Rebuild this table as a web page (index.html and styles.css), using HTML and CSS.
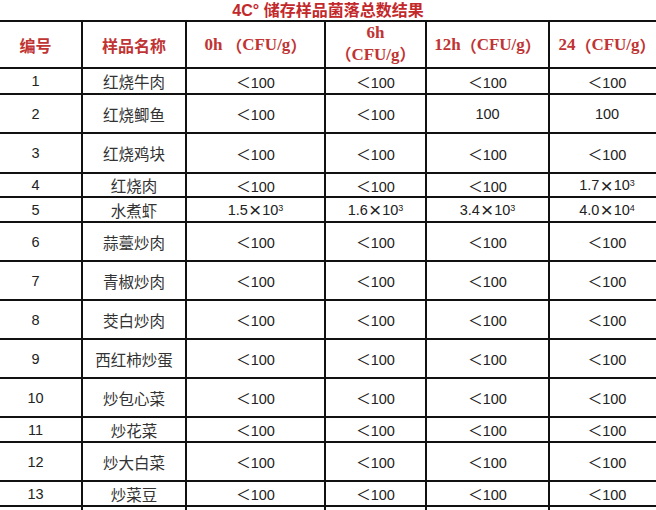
FILE: index.html
```html
<!DOCTYPE html>
<html lang="zh">
<head>
<meta charset="utf-8">
<title>4C° 储存样品菌落总数结果</title>
<link rel="stylesheet" href="styles.css">
</head>
<body>
<div class="page">
  <h1 class="title">4C° 储存样品菌落总数结果</h1>
  <div class="grid">
    <div class="cell head">编号</div>
    <div class="cell head">样品名称</div>
    <div class="cell head"><span class="lat">0h</span>&nbsp;（<span class="lat">CFU/g</span>）</div>
    <div class="cell head two"><span class="lat">6h</span><span>（<span class="lat">CFU/g</span>）</span></div>
    <div class="cell head"><span class="lat">12h</span>（<span class="lat">CFU/g</span>）</div>
    <div class="cell head"><span class="lat">24</span>（<span class="lat">CFU/g</span>）</div>

    <div class="cell num">1</div><div class="cell name">红烧牛肉</div><div class="cell num">＜100</div><div class="cell num">＜100</div><div class="cell num">＜100</div><div class="cell num">＜100</div>
    <div class="cell num">2</div><div class="cell name">红烧鲫鱼</div><div class="cell num">＜100</div><div class="cell num">＜100</div><div class="cell num">100</div><div class="cell num">100</div>
    <div class="cell num">3</div><div class="cell name">红烧鸡块</div><div class="cell num">＜100</div><div class="cell num">＜100</div><div class="cell num">＜100</div><div class="cell num">＜100</div>
    <div class="cell num">4</div><div class="cell name">红烧肉</div><div class="cell num">＜100</div><div class="cell num">＜100</div><div class="cell num">＜100</div><div class="cell num">1.7<span class="x">×</span>10<sup>3</sup></div>
    <div class="cell num">5</div><div class="cell name">水煮虾</div><div class="cell num">1.5<span class="x">×</span>10<sup>3</sup></div><div class="cell num">1.6<span class="x">×</span>10<sup>3</sup></div><div class="cell num">3.4<span class="x">×</span>10<sup>3</sup></div><div class="cell num">4.0<span class="x">×</span>10<sup>4</sup></div>
    <div class="cell num">6</div><div class="cell name">蒜薹炒肉</div><div class="cell num">＜100</div><div class="cell num">＜100</div><div class="cell num">＜100</div><div class="cell num">＜100</div>
    <div class="cell num">7</div><div class="cell name">青椒炒肉</div><div class="cell num">＜100</div><div class="cell num">＜100</div><div class="cell num">＜100</div><div class="cell num">＜100</div>
    <div class="cell num">8</div><div class="cell name">茭白炒肉</div><div class="cell num">＜100</div><div class="cell num">＜100</div><div class="cell num">＜100</div><div class="cell num">＜100</div>
    <div class="cell num">9</div><div class="cell name">西红柿炒蛋</div><div class="cell num">＜100</div><div class="cell num">＜100</div><div class="cell num">＜100</div><div class="cell num">＜100</div>
    <div class="cell num">10</div><div class="cell name">炒包心菜</div><div class="cell num">＜100</div><div class="cell num">＜100</div><div class="cell num">＜100</div><div class="cell num">＜100</div>
    <div class="cell num">11</div><div class="cell name">炒花菜</div><div class="cell num">＜100</div><div class="cell num">＜100</div><div class="cell num">＜100</div><div class="cell num">＜100</div>
    <div class="cell num">12</div><div class="cell name">炒大白菜</div><div class="cell num">＜100</div><div class="cell num">＜100</div><div class="cell num">＜100</div><div class="cell num">＜100</div>
    <div class="cell num">13</div><div class="cell name">炒菜豆</div><div class="cell num">＜100</div><div class="cell num">＜100</div><div class="cell num">＜100</div><div class="cell num">＜100</div>
    <div class="cell"></div><div class="cell"></div><div class="cell"></div><div class="cell"></div><div class="cell"></div><div class="cell"></div>
  </div>
</div>
</body>
</html>
```

FILE: styles.css
```css
html, body {
  margin: 0;
  padding: 0;
  background: #ffffff;
  overflow: hidden;
}

.page {
  width: 656px;
  height: 510px;
  overflow: hidden;
}

.title {
  margin: 0;
  height: 20px;
  padding-top: 2px;
  box-sizing: border-box;
  line-height: 18px;
  font-family: "Liberation Sans", "Noto Sans CJK SC", sans-serif;
  font-size: 16px;
  font-weight: bold;
  color: #c3282b;
  text-align: center;
}

.grid {
  display: grid;
  margin-left: -10px;
  width: 676px;
  grid-template-columns: 93px 104px 139px 101px 123px 116px;
  grid-template-rows: 47px 26px 39px 40px 24px 25px 39px 39px 39px 39px 39px 25px 39px 25px 40px;
  border-top: 2px solid #111;
}

.cell {
  box-sizing: border-box;
  border-right: 2px solid #111;
  border-bottom: 2px solid #111;
  display: flex;
  align-items: center;
  justify-content: center;
  white-space: nowrap;
  color: #222;
}

.head {
  font-family: "Noto Sans CJK SC", sans-serif;
  font-weight: bold;
  font-size: 16px;
  color: #c03434;
}

.head .lat {
  font-family: "Liberation Serif", serif;
  font-weight: bold;
  font-size: 17px;
}

.head.two {
  flex-direction: column;
  line-height: 20px;
  padding-bottom: 2px;
}

.num {
  font-family: "Liberation Sans", "Noto Sans CJK SC", sans-serif;
  font-size: 14.5px;
}

.name {
  font-family: "Noto Sans CJK SC", sans-serif;
  font-size: 15.5px;
  color: #333;
}

.x {
  font-family: "Liberation Sans", sans-serif;
  font-size: 21px;
  font-weight: 300;
  line-height: 1;
  padding: 0 1px;
}

sup {
  font-size: 9px;
  line-height: 0;
  position: relative;
  top: -2px;
}
```
